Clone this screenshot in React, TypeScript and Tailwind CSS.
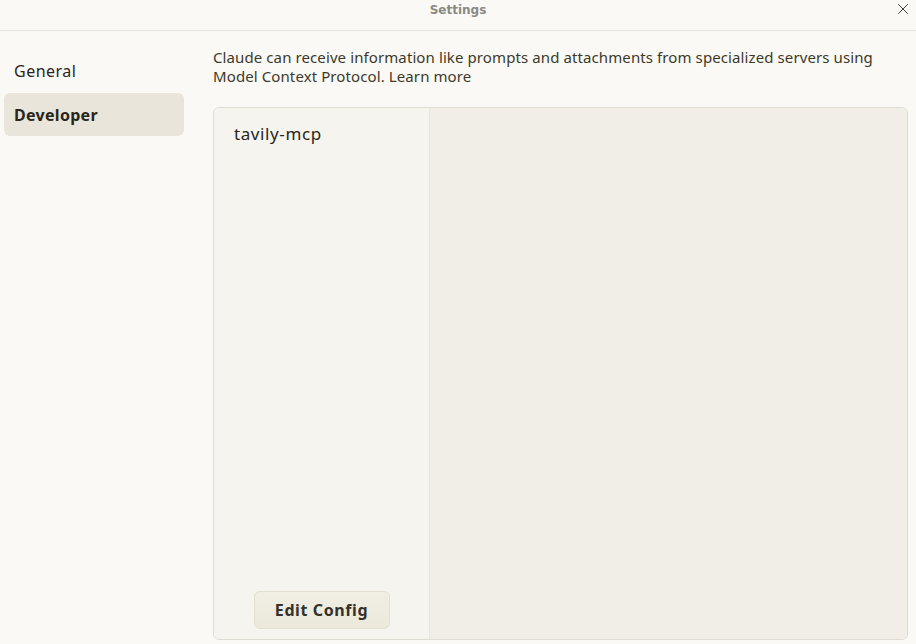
import { X } from "lucide-react";

const font = { fontFamily: '"Noto Sans", Lato, sans-serif' };

const App = () => {
    return (
        <div className="w-[916px] h-[644px] bg-[#faf9f5] flex flex-col text-[#29261b] overflow-hidden" style={font}>
            <div className="h-[31px] shrink-0 border-b border-[#e5e3dc] relative flex items-center justify-center">
                <span className="text-[12px] font-semibold text-[#8a8985] -mt-[10px]" style={{ fontFamily: '"DejaVu Sans", sans-serif' }}>Settings</span>
                <button className="absolute right-[4px] top-[0px] text-black">
                    <X size={18} strokeWidth={1} />
                </button>
            </div>
            <div className="flex flex-1 min-h-0">
                <nav className="w-[184px] shrink-0 pl-[4px] pt-[25px] flex flex-col gap-[7px]">
                    <div className="h-[30px] px-[10px] flex items-center text-[16px] tracking-[0.5px]">General</div>
                    <div className="h-[43px] px-[10px] flex items-center text-[16px] tracking-[0.3px] font-bold rounded-[6px] bg-[#e9e5da]">Developer</div>
                </nav>
                <main className="flex-1 pl-[29px] pr-[8px] pt-[17px] pb-[4px] flex flex-col">
                    <p className="text-[15px] leading-[19px] tracking-[0.1px] text-[#3d3929] max-w-[680px]">
                        Claude can receive information like prompts and attachments from specialized servers using
                        <br />
                        Model Context Protocol. <span>Learn more</span>
                    </p>
                    <div className="mt-[21px] flex-1 flex border border-[#dedcd3] rounded-[6px] overflow-hidden">
                        <div className="w-[216px] shrink-0 bg-[#f5f4ef] border-r border-[#e8e6de] flex flex-col justify-between px-[20px] pt-[13px] pb-[10px]">
                            <div className="text-[17px] tracking-[0.6px]">tavily-mcp</div>
                            <button className="self-center h-[38px] w-[136px] rounded-[6px] border border-[#e3e0d2] bg-gradient-to-b from-[#f1eee3] to-[#ebe8dc] text-[16px] tracking-[0.6px] font-bold text-[#33312a]">
                                Edit Config
                            </button>
                        </div>
                        <div className="flex-1 bg-[#f0eee6]" />
                    </div>
                </main>
            </div>
        </div>
    );
};

export default App;
